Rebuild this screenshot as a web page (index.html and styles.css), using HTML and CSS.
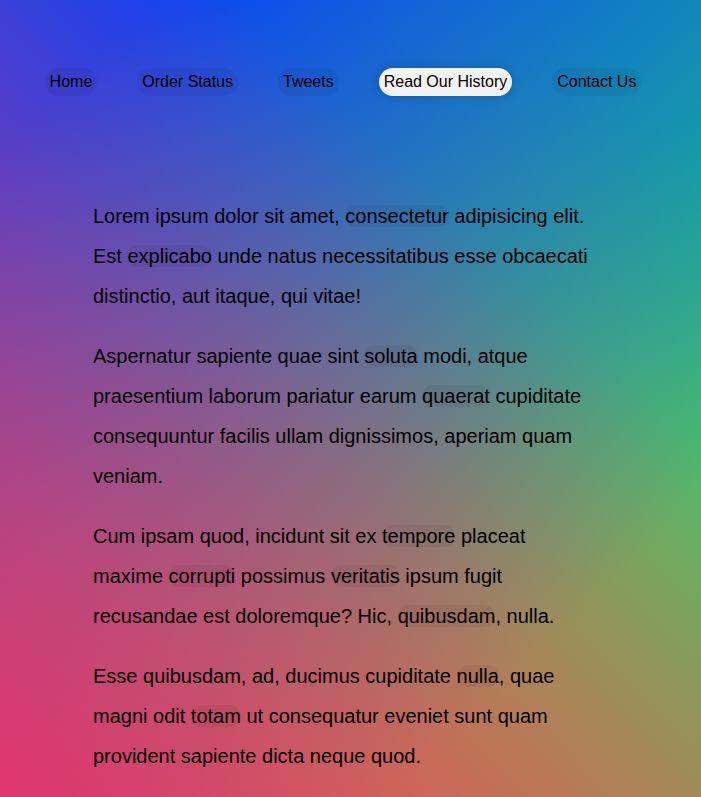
FILE: index.html
```html
<!DOCTYPE html>
<html lang="en">
<head>
<meta charset="utf-8">
<title>Follow Along Nav</title>
<link rel="stylesheet" href="styles.css">
</head>
<body>
<nav>
  <ul class="menu">
    <li><a href="#">Home</a></li>
    <li><a href="#">Order Status</a></li>
    <li><a href="#">Tweets</a></li>
    <li><a href="#" class="active">Read Our History</a></li>
    <li><a href="#">Contact Us</a></li>
  </ul>
</nav>
<div class="wrapper">
  <p>Lorem ipsum dolor sit amet, <a href="#">consectetur</a> adipisicing elit. Est <a href="#">explicabo</a> unde natus necessitatibus esse obcaecati distinctio, aut itaque, qui vitae!</p>
  <p>Aspernatur sapiente quae sint <a href="#">soluta</a> modi, atque praesentium laborum pariatur earum <a href="#">quaerat</a> cupiditate consequuntur facilis ullam dignissimos, aperiam quam veniam.</p>
  <p>Cum ipsam quod, incidunt sit ex <a href="#">tempore</a> placeat maxime <a href="#">corrupti</a> possimus <a href="#">veritatis</a> ipsum fugit recusandae est doloremque? Hic, <a href="#">quibusdam</a>, nulla.</p>
  <p>Esse quibusdam, ad, ducimus cupiditate <a href="#">nulla</a>, quae magni odit <a href="#">totam</a> ut consequatur eveniet sunt quam provident sapiente dicta neque quod.</p>
</div>
</body>
</html>
```

FILE: styles.css
```css
html {
  box-sizing: border-box;
  min-height: 100%;
}
*, *::before, *::after {
  box-sizing: inherit;
}
body {
  min-height: 100vh;
  margin: 0;
  padding-right: 15px;
  font-family: "Liberation Sans", Arial, sans-serif;
  background:
    linear-gradient(45deg, rgba(224, 53, 111, 1) 0%, rgba(224, 53, 111, 0) 70%),
    linear-gradient(135deg, hsla(225, 95%, 50%, 1) 10%, hsla(225, 95%, 50%, 0) 80%),
    linear-gradient(225deg, rgba(30, 195, 130, 1) 10%, rgba(30, 195, 130, 0) 80%),
    linear-gradient(315deg, rgb(195, 170, 45) 0%, rgb(195, 170, 45) 100%);
}
a {
  text-decoration: none;
  color: black;
  background: rgba(0, 0, 0, 0.05);
  border-radius: 20px;
}
.menu {
  padding: 0;
  display: flex;
  list-style: none;
  justify-content: center;
  margin: 68px 0 100px;
}
.menu a {
  display: inline-block;
  padding: 5px;
  margin: 0 20px;
  color: black;
}
.menu a.active {
  background: linear-gradient(rgba(0, 0, 0, 0.05), rgba(0, 0, 0, 0.05)), #fff;
  box-shadow: 0 0 10px rgba(0, 0, 0, 0.2);
}
.wrapper {
  margin: 0 auto;
  max-width: 500px;
  font-size: 20px;
  line-height: 2;
}
.wrapper p {
  margin: 20px 0;
}
```
